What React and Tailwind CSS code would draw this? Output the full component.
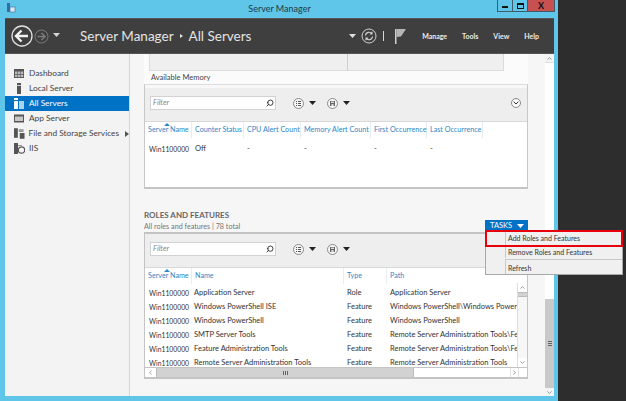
import { ChevronUp, ChevronDown, ChevronLeft, ChevronRight, Search } from "lucide-react";

const NAV = [
  { label: "Dashboard", icon: "dash" },
  { label: "Local Server", icon: "local" },
  { label: "All Servers", icon: "all", active: true },
  { label: "App Server", icon: "app" },
  { label: "File and Storage Services", icon: "file", arrow: true },
  { label: "IIS", icon: "iis" },
];

const TOP_COLS = [
  { label: "Server Name", w: "w-[47px]" },
  { label: "Counter Status", w: "w-[52px]" },
  { label: "CPU Alert Count", w: "w-[57px]" },
  { label: "Memory Alert Count", w: "w-[70px]" },
  { label: "First Occurrence", w: "w-[56px]" },
  { label: "Last Occurrence", w: "w-[56px]" },
];

const ROWS = [
  ["Application Server", "Role", "Application Server"],
  ["Windows PowerShell ISE", "Feature", "Windows PowerShell\\Windows PowerShell ISE"],
  ["Windows PowerShell", "Feature", "Windows PowerShell"],
  ["SMTP Server Tools", "Feature", "Remote Server Administration Tools\\Feature"],
  ["Feature Administration Tools", "Feature", "Remote Server Administration Tools\\Feature"],
  ["Remote Server Administration Tools", "Feature", "Remote Server Administration Tools"],
];

const NavIcon = ({ type, active }) => {
  const c = active ? "#ffffff" : "#555555";
  const l = active ? "#a9d3ee" : "#9a9a9a";
  return (
    <svg width="11" height="11" viewBox="0 0 11 11">
      {type === "dash" && (
        <>
          <rect x="0" y="1" width="10" height="9" fill={c} />
          <rect x="1" y="3.5" width="2.4" height="2.5" fill="#bbb" />
          <rect x="4" y="3.5" width="2.4" height="2.5" fill="#bbb" />
          <rect x="7" y="3.5" width="2.2" height="2.5" fill="#bbb" />
          <rect x="1" y="6.7" width="2.4" height="2.4" fill="#bbb" />
          <rect x="4" y="6.7" width="2.4" height="2.4" fill="#bbb" />
          <rect x="7" y="6.7" width="2.2" height="2.4" fill="#bbb" />
        </>
      )}
      {type === "local" && (
        <>
          <rect x="3" y="0" width="4" height="11" fill={c} />
          <rect x="3" y="2" width="4" height="1" fill="#ccc" />
        </>
      )}
      {type === "all" && (
        <>
          <rect x="0" y="0" width="4" height="11" fill={c} />
          <rect x="5" y="3" width="5" height="8" fill={l} />
          <rect x="0" y="2" width="4" height="1" fill="#0072c6" />
        </>
      )}
      {type === "app" && (
        <>
          <rect x="0" y="1.5" width="10" height="8" fill={c} />
          <rect x="1" y="3.5" width="8" height="4.5" fill="#c8c8c8" />
        </>
      )}
      {type === "file" && (
        <>
          <rect x="0" y="0" width="4" height="10" fill={c} />
          <rect x="5" y="1" width="5" height="3" fill={l} />
          <rect x="6" y="5" width="5" height="6" fill={c} />
        </>
      )}
      {type === "iis" && (
        <>
          <rect x="0" y="0" width="4" height="11" fill={c} />
          <circle cx="7.5" cy="7" r="3.2" fill="none" stroke={c} strokeWidth="1.2" />
          <rect x="4" y="2" width="4" height="1" fill={l} />
        </>
      )}
    </svg>
  );
};

const Caret = ({ color = "#222222" }) => (
  <svg width="7" height="4" viewBox="0 0 7 4">
    <path d="M0 0h7L3.5 4z" fill={color} />
  </svg>
);

const RoundIcon = ({ type }) => (
  <span className="flex h-[11px] w-[11px] items-center justify-center rounded-full border border-[#8a8a8a] bg-[#f7f7f7]">
    {type === "list" ? (
      <svg width="5" height="5" viewBox="0 0 5 5">
        <path d="M0 .5h1M0 2.5h1M0 4.5h1M2 .5h3M2 2.5h3M2 4.5h3" stroke="#555" strokeWidth="1" />
      </svg>
    ) : (
      <svg width="5" height="5" viewBox="0 0 5 5">
        <rect width="5" height="5" fill="#666" />
        <rect x="1" y="0.6" width="3" height="1.4" fill="#ddd" />
        <rect x="1.4" y="3" width="2.2" height="2" fill="#ddd" />
      </svg>
    )}
  </span>
);

const FilterBar = ({ expander }) => (
  <div className="flex h-[33px] items-center bg-[#eeeeee] pb-[3px] pl-[5px] pr-[6px]">
    <div className="flex h-[14px] w-[126px] items-center justify-between border border-[#d2d2d2] bg-white pl-[2px] pr-[1px]">
      <span className="text-[7.5px] italic text-[#888888]">Filter</span>
      <Search size={8} strokeWidth={2.6} color="#222222" className="-scale-x-100" />
    </div>
    <div className="ml-[17px] flex items-center gap-[5px]">
      <RoundIcon type="list" />
      <Caret />
    </div>
    <div className="ml-[11px] flex items-center gap-[5px]">
      <RoundIcon type="save" />
      <Caret />
    </div>
    {expander && (
      <span className="ml-auto flex h-[10px] w-[10px] items-center justify-center rounded-full border border-[#8a8a8a] bg-[#f7f7f7]">
        <ChevronDown size={8} strokeWidth={3} color="#333333" />
      </span>
    )}
  </div>
);

const HeadCell = ({ label, className }) => (
  <div className={`flex h-[16px] shrink-0 items-center border-r border-[#e4eef5] pl-[3px] text-[7.2px] whitespace-nowrap text-[#2f86c8] ${className}`}>
    {label}
  </div>
);

const SortMark = () => (
  <span className="absolute left-[19px] top-[1px] h-0 w-0 border-x-[3px] border-b-[3px] border-x-transparent border-b-[#2f86c8]" />
);

const App = () => {
  return (
    <div className="flex h-[401px] w-[626px] overflow-hidden bg-[#2d2d2d] font-['Lato',sans-serif] text-[#444444]">
      <div className="relative flex h-full w-[558px] flex-col bg-[#5fc6ea] pb-[5px] pl-[5px] pr-[4px]">
        {/* title bar */}
        <div className="relative flex h-[18px] shrink-0 items-center justify-center pb-[1px]">
          <span className="text-[9px] text-[#1c3a48]">Server Manager</span>
          <svg className="absolute left-[1px] top-[3px]" width="10" height="10" viewBox="0 0 10 10">
            <rect x="1" y="0" width="3" height="9" fill="#2f6fb0" />
            <rect x="4" y="4" width="5" height="5" fill="#dfe8ef" stroke="#3b6d99" strokeWidth="0.6" />
          </svg>
          <div className="absolute right-[-1px] top-0 flex h-[12px] items-stretch border-b border-l border-r border-[#3f5c68]">
            <div className="flex w-[15px] items-center justify-center border-r border-[#3f5c68]">
              <span className="mt-[3px] h-[2px] w-[6px] bg-[#111111]" />
            </div>
            <div className="flex w-[15px] items-center justify-center border-r border-[#3f5c68]">
              <span className="h-[6px] w-[7px] border border-t-2 border-[#111111]" />
            </div>
            <div className="flex w-[26px] items-center justify-center bg-[#c75050] text-[9px] font-bold leading-none text-[#111111]">
              X
            </div>
          </div>
        </div>

        {/* header */}
        <div className="flex h-[36px] shrink-0 items-center border-y border-[#555555] bg-[#3f3f3f] pl-[6px] pr-[15px]">
          <svg width="22" height="22" viewBox="0 0 22 22">
            <circle cx="11" cy="11" r="10" fill="none" stroke="#e2e2e2" strokeWidth="1.3" />
            <path d="M5 11h12M10.5 5.5 5 11l5.500 5.500" fill="none" stroke="#f2f2f2" strokeWidth="2.400" />
          </svg>
          <svg className="ml-[1px]" width="15" height="15" viewBox="0 0 15 15">
            <circle cx="7.500" cy="7.500" r="6.500" fill="none" stroke="#7a7a7a" strokeWidth="1" />
            <path d="M3.500 7.500h7M7.500 4l3.500 3.500L7.500 11" fill="none" stroke="#7a7a7a" strokeWidth="1.500" />
          </svg>
          <span className="ml-[4px] mb-[3px]">
            <Caret color="#d5d5d5" />
          </span>
          <span className="ml-[20px] text-[13.5px] text-[#e4e4e4]">Server Manager</span>
          <span className="mx-[6px] h-0 w-0 border-y-[2.500px] border-l-[3px] border-y-transparent border-l-[#e4e4e4]" />
          <span className="text-[13.5px] text-[#e4e4e4]">All Servers</span>
          <span className="ml-auto">
            <Caret color="#e0e0e0" />
          </span>
          <svg className="ml-[5px]" width="16" height="16" viewBox="0 0 16 16">
            <circle cx="8" cy="8" r="7" fill="none" stroke="#d0d0d0" strokeWidth="1" />
            <path d="M4.500 7.500A3.500 3.500 0 0 1 11 6M11.500 8.500A3.500 3.500 0 0 1 5 10M11 3.800V6H8.800M5 12.200V10h2.200" fill="none" stroke="#d0d0d0" strokeWidth="1.100" />
          </svg>
          <span className="ml-[6px] h-[10px] w-[1px] bg-[#d8d8d8]" />
          <svg className="ml-[11px]" width="11" height="15" viewBox="0 0 11 15">
            <rect x="0" y="0" width="1.500" height="15" fill="#cfcfcf" />
            <path d="M1.500 0H11L6 7.500 1.500 8z" fill="#b5b5b5" />
          </svg>
          <nav className="ml-[16px] flex gap-[15px] text-[7px] font-bold text-[#ececec]">
            <span>Manage</span>
            <span>Tools</span>
            <span>View</span>
            <span>Help</span>
          </nav>
        </div>

        <div className="flex min-h-0 flex-1">
          {/* sidebar */}
          <aside className="w-[125px] shrink-0 border-r border-[#d5d5d5] bg-[#f3f3f3] pt-[12px]">
            {NAV.map((item) => (
              <div
                key={item.label}
                className={`flex h-[15px] items-center pl-[9px] text-[8.3px] whitespace-nowrap ${item.active ? "bg-[#0072c6] text-white" : "text-[#444444]"}`}
              >
                <NavIcon type={item.icon} active={item.active} />
                <span className="ml-[4px]">{item.label}</span>
                {item.arrow && (
                  <span className="ml-[6px] h-0 w-0 border-y-[3px] border-l-[4px] border-y-transparent border-l-[#555555]" />
                )}
              </div>
            ))}
          </aside>

          {/* main */}
          <main className="flex min-w-0 flex-1 bg-[#f6f6f6]">
            <div className="w-[414px] shrink-0 overflow-hidden pl-[14px]">
              <div className="w-[384px]">
                {/* performance remainder */}
                <div className="flex h-[17px] bg-[#fbfbfb] pl-[5px] pr-[24px]">
                  <div className="w-[198px] border-b border-l border-[#dcdcdc] border-r-[#a6dcec] bg-[#efefef]" />
                  <div className="flex-1 border-x border-b border-l-[#a6dcec] border-r-[#dcdcdc] border-b-[#dcdcdc] bg-[#efefef]" />
                </div>
                <div className="flex h-[13px] items-center bg-[#fbfbfb] pl-[7px] text-[7.500px] text-[#444444]">
                  Available Memory
                </div>

                {/* events */}
                <div className="border-x border-t border-b-2 border-x-[#c8c8c8] border-t-[#dddddd] border-b-[#c4c4c4] bg-white">
                  <div className="h-[3px] bg-[#f8f8f8]" />
                  <FilterBar expander />
                  <div className="h-[66px] border-t border-[#d8d8d8]">
                    <div className="relative flex">
                      <SortMark />
                      {TOP_COLS.map((col) => (
                        <HeadCell key={col.label} label={col.label} className={col.w} />
                      ))}
                    </div>
                    <div className="mt-[5px] flex items-center text-[7.500px] text-[#333333]">
                      <span className="w-[47px] pl-[4px] text-[6.800px]">Win1100000</span>
                      <span className="w-[52px] pl-[3px]">Off</span>
                      <span className="w-[57px] pl-[3px]">-</span>
                      <span className="w-[70px] pl-[3px]">-</span>
                      <span className="w-[56px] pl-[3px]">-</span>
                      <span className="w-[56px] pl-[3px]">-</span>
                    </div>
                  </div>
                </div>

                {/* roles and features */}
                <div className="relative mt-[20px] flex h-[23px] items-start justify-between">
                  <div className="pt-[1px]">
                    <div className="text-[8px] leading-[11px] font-bold text-[#666666]">ROLES AND FEATURES</div>
                    <div className="text-[7.2px] leading-[11px] text-[#777777]">All roles and features | 78 total</div>
                  </div>
                  <div className="mt-[11px] flex h-[12px] w-[43px] items-center justify-between bg-[#0072c6] pl-[5px] pr-[4px] text-[7.500px] text-white">
                    <span>TASKS</span>
                    <Caret color="#ffffff" />
                  </div>
                </div>

                <div className="border-x border-y-2 border-x-[#c4c4c4] border-y-[#c4c4c4] bg-white">
                  <FilterBar />
                  <div className="flex h-[16px] border-t border-[#d8d8d8]">
                    <div className="relative flex">
                      <SortMark />
                      <HeadCell label="Server Name" className="w-[47px]" />
                      <HeadCell label="Name" className="w-[152px]" />
                      <HeadCell label="Type" className="w-[43px]" />
                      <HeadCell label="Path" className="w-[130px] border-r-0" />
                    </div>
                  </div>
                  <div className="flex h-[84px]">
                    <div className="w-[373px] overflow-hidden pt-[3px]">
                      {ROWS.map((row) => (
                        <div key={row[0]} className="flex h-[14px] items-center text-[7.500px] whitespace-nowrap text-[#333333]">
                          <span className="w-[47px] shrink-0 pl-[4px] text-[6.800px]">Win1100000</span>
                          <span className="w-[152px] shrink-0 pl-[2px]">{row[0]}</span>
                          <span className="w-[43px] shrink-0 pl-[3px]">{row[1]}</span>
                          <span className="w-[130px] shrink-0 overflow-hidden pl-[3px]">{row[2]}</span>
                        </div>
                      ))}
                    </div>
                    <div className="flex w-[10px] flex-col items-center justify-between border-l border-[#dddddd] bg-[#f7f7f7]">
                      <div className="w-full">
                        <div className="flex h-[9px] items-center justify-center bg-white">
                          <ChevronUp size={7} strokeWidth={2.500} color="#777777" />
                        </div>
                        <div className="h-[5px] border-y border-[#bbbbbb] bg-[#d2d2d2]" />
                      </div>
                      <div className="flex h-[9px] w-full items-center justify-center bg-white">
                        <ChevronDown size={7} strokeWidth={2.500} color="#777777" />
                      </div>
                    </div>
                  </div>
                  <div className="flex h-[10px] items-stretch border-t border-[#c4c4c4] bg-white">
                    <div className="flex w-[11px] items-center justify-center">
                      <ChevronLeft size={7} strokeWidth={2.500} color="#777777" />
                    </div>
                    <div className="flex w-[258px] items-center justify-center gap-[1px] border-x border-[#bbbbbb] bg-[#d2d2d2]">
                      <span className="h-[4px] w-[1px] bg-[#666666]" />
                      <span className="h-[4px] w-[1px] bg-[#666666]" />
                      <span className="h-[4px] w-[1px] bg-[#666666]" />
                    </div>
                    <div className="w-[96px]" />
                    <div className="flex w-[9px] items-center justify-center border-x border-[#e0e0e0]">
                      <ChevronRight size={7} strokeWidth={2.500} color="#777777" />
                    </div>
                  </div>
                </div>
              </div>
            </div>

            {/* page scrollbar */}
            <div className="ml-auto flex w-[9px] flex-col bg-white">
              <div className="flex h-[9px] items-center justify-center border-b border-[#dddddd] bg-[#f4f4f4]">
                <ChevronUp size={7} strokeWidth={2.500} color="#777777" />
              </div>
              <div className="flex-1" />
              <div className="flex h-[89px] flex-col items-center justify-center gap-[1px] bg-[#c9c9c9]">
                <span className="h-[1px] w-[4px] bg-[#666666]" />
                <span className="h-[1px] w-[4px] bg-[#666666]" />
                <span className="h-[1px] w-[4px] bg-[#666666]" />
              </div>
              <div className="flex h-[8px] items-center justify-center bg-[#f4f4f4]">
                <ChevronDown size={7} strokeWidth={2.500} color="#777777" />
              </div>
            </div>
          </main>
        </div>

        {/* tasks menu, overhangs the window */}
        <div className="absolute left-[485px] top-[231px] w-[138px] border-x border-b border-[#a8a8a8] bg-[#f0f0f0] text-[7px] text-[#333333]">
          <div className="flex h-[15px] items-center outline-2 -outline-offset-1 outline-[#e8000c]">
            <span className="ml-[19px] h-full w-[1px] bg-[#c8c8c8]" />
            <span className="ml-[2px]">Add Roles and Features</span>
          </div>
          <div className="flex h-[12px] items-center">
            <span className="ml-[19px] h-full w-[1px] bg-[#c8c8c8]" />
            <span className="ml-[2px]">Remove Roles and Features</span>
          </div>
          <div className="ml-[19px] h-[3px] border-l border-[#c8c8c8]">
            <div className="mt-[1px] h-[1px] bg-[#c8c8c8]" />
          </div>
          <div className="flex h-[12px] items-center">
            <span className="ml-[19px] h-full w-[1px] bg-[#c8c8c8]" />
            <span className="ml-[2px]">Refresh</span>
          </div>
        </div>
      </div>
    </div>
  );
};

export default App;
